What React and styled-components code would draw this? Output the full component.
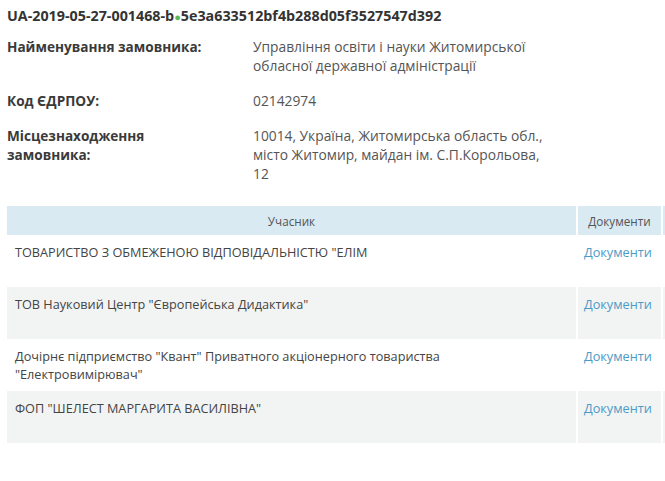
import React from "react";
import styled, { createGlobalStyle } from "styled-components";

const Global = createGlobalStyle`
  html, body { margin: 0; padding: 0; background: #fff; }
  body { font-family: "Open Sans", "Noto Sans", sans-serif; color: #333; }
`;

const Page = styled.div`
  box-sizing: border-box;
  width: 665px;
  overflow: hidden;
  padding: 6px 0 0 7px;
`;

const Title = styled.div`
  font-size: 14.3px;
  font-weight: 700;
  line-height: 20px;
  color: #333;
  margin-bottom: 10px;
  white-space: nowrap;
`;

const Dot = styled.span`
  color: #5cb85c;
  font-size: 11px;
`;

const Info = styled.div`
  display: grid;
  grid-template-columns: 246px 300px;
  row-gap: 16px;
  font-size: 13.8px;
  line-height: 19px;
`;

const Label = styled.div`
  font-weight: 700;
  font-size: 13.6px;
  color: #3a3a3a;
`;

const Value = styled.div`
  color: #555;
`;

const Table = styled.div`
  margin-top: 23px;
  display: grid;
  grid-template-columns: 569px 83px 100px;
  column-gap: 2px;
`;

const HeadCell = styled.div`
  background: #d9eaf3;
  height: 29px;
  display: flex;
  align-items: center;
  justify-content: center;
  font-size: 11.7px;
  color: #555;
`;

const Cell = styled.div`
  background: ${(p) => (p.$alt ? "#f2f4f4" : "#fff")};
  height: 52px;
  box-sizing: border-box;
  padding: 8px 8px;
  font-size: 12.7px;
  line-height: 18px;
  color: #444;
`;

const LinkCell = styled(Cell)`
  padding: 8px 6px;
`;

const DocLink = styled.a`
  color: #4a9bc7;
  text-decoration: none;
`;

const rows = [
  'ТОВАРИСТВО З ОБМЕЖЕНОЮ ВІДПОВІДАЛЬНІСТЮ "ЕЛІМ',
  'ТОВ Науковий Центр "Європейська Дидактика"',
  'Дочірнє підприємство "Квант" Приватного акціонерного товариства "Електровимірювач"',
  'ФОП "ШЕЛЕСТ МАРГАРИТА ВАСИЛІВНА"',
];

export default function App() {
  return (
    <>
      <Global />
      <Page>
        <Title>
          UA-2019-05-27-001468-b<Dot>●</Dot>5e3a633512bf4b288d05f3527547d392
        </Title>
        <Info>
          <Label>Найменування замовника:</Label>
          <Value>
            Управління освіти і науки Житомирської обласної державної адміністрації
          </Value>
          <Label>Код ЄДРПОУ:</Label>
          <Value>02142974</Value>
          <Label>
            Місцезнаходження
            <br />
            замовника:
          </Label>
          <Value>
            10014, Україна, Житомирська область обл., місто Житомир, майдан ім. С.П.Корольова, 12
          </Value>
        </Info>
        <Table>
          <HeadCell>Учасник</HeadCell>
          <HeadCell>Документи</HeadCell>
          <HeadCell />
          {rows.map((r, i) => (
            <React.Fragment key={i}>
              <Cell $alt={i % 2 === 1}>{r}</Cell>
              <LinkCell $alt={i % 2 === 1}>
                <DocLink href="#">Документи</DocLink>
              </LinkCell>
              <Cell $alt={i % 2 === 1} />
            </React.Fragment>
          ))}
        </Table>
      </Page>
    </>
  );
}
